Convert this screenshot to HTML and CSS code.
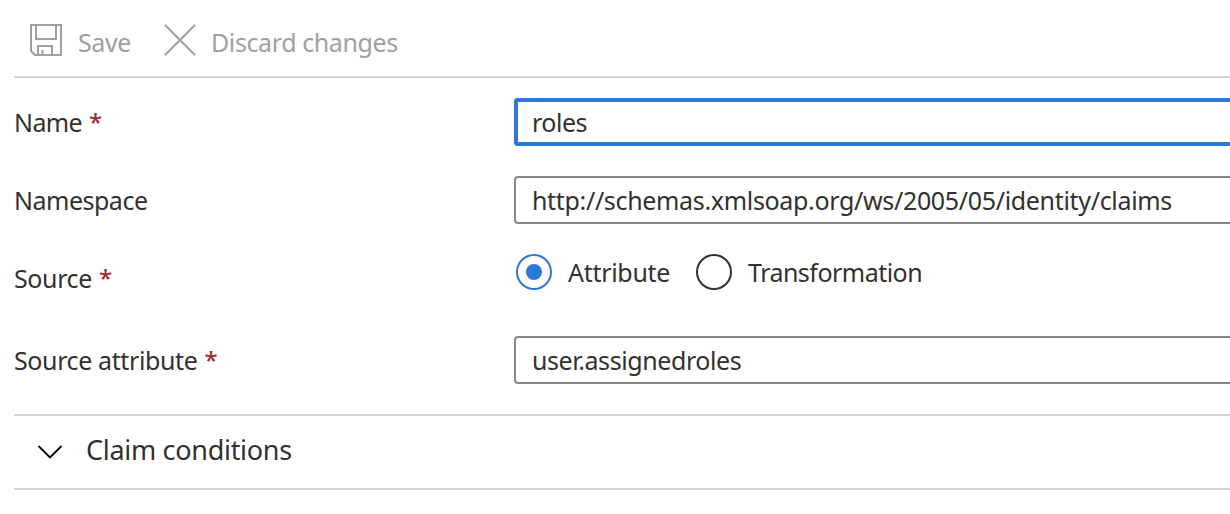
FILE: index.html
```html
<!DOCTYPE html>
<html lang="en">
<head>
<meta charset="utf-8">
<title>Manage claim</title>
<link rel="stylesheet" href="styles.css">
</head>
<body>
<main class="panel">
  <div class="toolbar">
    <button class="command save" type="button">
      <svg class="icon" width="32" height="32" viewBox="0 0 32 32" fill="none" stroke="#a0a0a0" stroke-width="2">
        <path d="M1 1H31V31H5L1 27V1ZM6 1V15H26V1M8 31V22H22V31M12.5 31V26" />
      </svg>
      <span class="text">Save</span>
    </button>
    <button class="command discard" type="button">
      <svg class="icon" width="32" height="32" viewBox="0 0 32 32" fill="none" stroke="#a0a0a0" stroke-width="2">
        <path d="M.8 .8L31.2 31.2M31.2 .8L.8 31.2" />
      </svg>
      <span class="text">Discard changes</span>
    </button>
  </div>
  <form class="form">
    <div class="row">
      <label class="label name">Name <span class="required">*</span></label>
      <div class="field focused"><span class="roles">roles</span></div>
    </div>
    <div class="row">
      <label class="label namespace">Namespace</label>
      <div class="field"><span class="url">http://schemas.xmlsoap.org/ws/2005/05/identity/claims</span></div>
    </div>
    <div class="row source-row">
      <label class="label source">Source <span class="required">*</span></label>
      <div class="radios">
        <div class="option attribute"><span class="radio checked"></span><span>Attribute</span></div>
        <div class="option transformation"><span class="radio"></span><span>Transformation</span></div>
      </div>
    </div>
    <div class="row">
      <label class="label source-attribute">Source attribute <span class="required">*</span></label>
      <div class="field"><span class="assigned">user.assignedroles</span></div>
    </div>
  </form>
  <section class="accordion">
    <svg class="chevron" width="26" height="16" viewBox="0 0 26 16" fill="none" stroke="#000" stroke-width="1.8">
      <path d="M1.5 2L13 13.5L24.5 2" />
    </svg>
    <span class="heading">Claim conditions</span>
  </section>
</main>
</body>
</html>
```
FILE: styles.css
```css
* { box-sizing: border-box; }
body {
  margin: 0;
  background: #fff;
  color: #323130;
  font: 25px/36px "Noto Sans", "Open Sans", sans-serif;
  overflow: hidden;
}
.panel { padding-left: 14px; }
.toolbar {
  display: flex;
  height: 78px;
  padding: 24px 0 0 16px;
  border-bottom: 2px solid #d6d6d6;
}
.command {
  display: flex;
  align-items: flex-start;
  height: 36px;
  padding: 0;
  border: 0;
  background: none;
  color: #a0a0a0;
  font: inherit;
  white-space: nowrap;
}
.save { width: 134px; gap: 16px; letter-spacing: -0.4px; }
.discard { gap: 15px; letter-spacing: -0.4px; }
.form { display: grid; row-gap: 30px; padding-top: 20px; }
.row {
  display: grid;
  grid-template-columns: 500px 1fr;
  align-items: center;
  height: 48px;
  white-space: nowrap;
}
.source-row { margin-bottom: 4px; }
.label { letter-spacing: -0.6px; }
.namespace { letter-spacing: -0.5px; }
.source, .source-attribute { letter-spacing: -0.38px; }
.required {
  margin-left: 1px;
  color: #a4262c;
  font-weight: 500;
  font-size: 24px;
  line-height: 1;
  vertical-align: 1px;
}
.field {
  height: 48px;
  padding: 4px 16px;
  border: 2px solid #8a8886;
  border-right: 0;
  border-radius: 4px 0 0 4px;
}
.focused { padding: 2px 14px; border: 4px solid #2b78d6; border-right: 0; }
.roles { letter-spacing: -0.5px; }
.url { letter-spacing: -0.33px; }
.assigned { letter-spacing: -0.41px; }
.radios { display: flex; height: 48px; padding-bottom: 12px; }
.option { display: flex; align-items: center; gap: 16px; }
.attribute { width: 180px; margin-left: 2px; letter-spacing: -0.3px; }
.transformation { letter-spacing: -0.52px; }
.radio {
  display: grid;
  place-items: center;
  width: 36px;
  height: 36px;
  border: 2px solid #323130;
  border-radius: 50%;
}
.checked { border-color: #2b78d6; }
.checked::after {
  content: "";
  width: 16px;
  height: 16px;
  border-radius: 50%;
  background: #2b78d6;
}
.accordion {
  display: flex;
  align-items: center;
  height: 76px;
  margin-top: 30px;
  padding: 0 0 4px 23px;
  border: solid #d6d6d6;
  border-width: 2px 0;
  font-size: 27px;
}
.chevron { margin: 4px 23px 0 0; }
.heading { letter-spacing: -0.3px; }
```
